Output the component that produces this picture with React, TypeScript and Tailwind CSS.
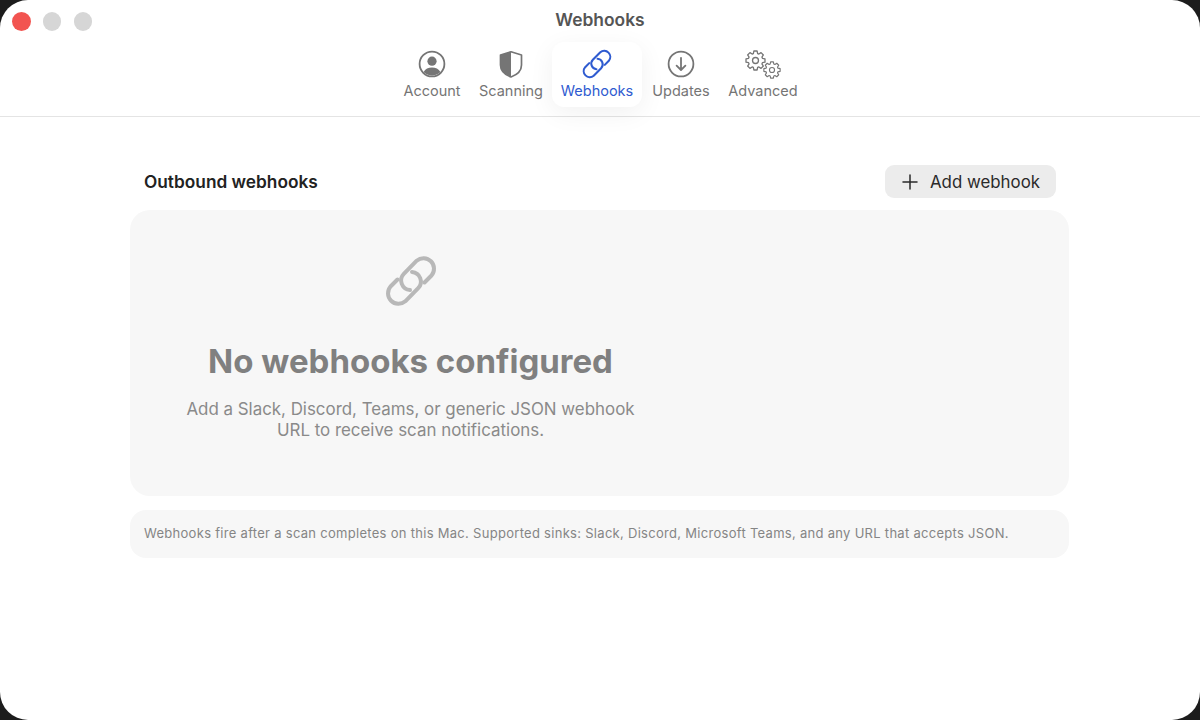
import { Plus } from 'lucide-react'
import type { ReactNode } from 'react'

function LinkIcon({ className = '', strokeWidth = 4 }: { className?: string; strokeWidth?: number }) {
  return (
    <svg viewBox="5 5 52 52" fill="none" stroke="currentColor" strokeWidth={strokeWidth} strokeLinecap="round" strokeLinejoin="round" className={className}>
      <path d="M44.500 32.500 51.500 25.500A10.500 10.500 0 0 0 36.700 10.700L23.800 23.800A9.600 9.600 0 0 0 30 40" />
      <path d="M17.500 29.500 10.500 36.500A10.500 10.500 0 0 0 25.300 51.300L38.200 38.200A9.600 9.600 0 0 0 32 22" />
    </svg>
  )
}

function AccountIcon() {
  return (
    <svg viewBox="0 0 28 28" className="h-7 w-7 text-[#757575]">
      <circle cx="14" cy="14" r="12.400" fill="none" stroke="currentColor" strokeWidth="1.800" />
      <circle cx="14" cy="11.200" r="4.600" fill="currentColor" />
      <path d="M5.600 22c1.600-3.300 4.800-4.600 8.400-4.600s6.800 1.300 8.400 4.600c-2.200 2.300-5.200 3.500-8.400 3.500s-6.200-1.200-8.400-3.500z" fill="currentColor" />
    </svg>
  )
}

function ShieldIcon() {
  return (
    <svg viewBox="0 0 28 28" className="h-7 w-7 text-[#757575]">
      <path d="M14 1.800 24.500 5v10c0 6-4.500 9.800-10.500 12C8 24.800 3.500 21 3.500 15V5z" fill="none" stroke="currentColor" strokeWidth="1.700" strokeLinejoin="round" />
      <path d="M14 1.800V27C8 24.800 3.500 21 3.500 15V5z" fill="currentColor" />
    </svg>
  )
}

function UpdatesIcon() {
  return (
    <svg viewBox="0 0 28 28" fill="none" stroke="currentColor" strokeWidth="1.800" strokeLinecap="round" strokeLinejoin="round" className="h-7 w-7 text-[#757575]">
      <circle cx="14" cy="14" r="12.400" />
      <path d="M14 7.800v12M9.600 15.600l4.400 4.400 4.400-4.400" />
    </svg>
  )
}

// cog outline with 8 teeth
function cogPath(outer: number, root: number) {
  const pts: string[] = []
  for (let i = 0; i < 8; i++) {
    const a = (i * Math.PI) / 4 - Math.PI / 2
    const offsets: [number, number][] = [
      [-0.3, root],
      [-0.17, outer],
      [0.17, outer],
      [0.3, root],
    ]
    offsets.forEach(([o, r]) => {
      pts.push(`${(12 + r * Math.cos(a + o)).toFixed(2)} ${(12 + r * Math.sin(a + o)).toFixed(2)}`)
    })
  }
  return `M${pts.join('L')}Z`
}

function Cog({ className = '' }: { className?: string }) {
  return (
    <svg viewBox="0 0 24 24" fill="none" stroke="currentColor" strokeWidth="1.500" strokeLinejoin="round" className={className}>
      <path d={cogPath(11, 8.300)} />
      <circle cx="12" cy="12" r="3.400" />
    </svg>
  )
}

function GearsIcon() {
  return (
    <span className="relative block h-7 w-9 text-[#757575]">
      <Cog className="absolute left-[0px] top-[0px] h-[21px] w-[21px]" />
      <Cog className="absolute left-[18px] top-[11px] h-[18px] w-[18px]" />
    </span>
  )
}

const tabs: { label: string; icon: ReactNode; active?: boolean; width: string }[] = [
  { label: 'Account', icon: <AccountIcon />, width: 'w-[76px]' },
  { label: 'Scanning', icon: <ShieldIcon />, width: 'w-[82px]' },
  { label: 'Webhooks', icon: <LinkIcon className="h-[30px] w-[30px]" strokeWidth={3.6} />, active: true, width: 'w-[90px]' },
  { label: 'Updates', icon: <UpdatesIcon />, width: 'w-[78px]' },
  { label: 'Advanced', icon: <GearsIcon />, width: 'w-[86px]' },
]

export default function App() {
  return (
    <div className="h-[720px] w-[1200px] overflow-hidden bg-[#1c1c1c] font-['Inter',sans-serif]">
      <div className="h-full w-full rounded-[28px] bg-white">
        {/* Title bar and toolbar */}
        <header className="relative flex h-[117px] flex-col items-center border-b border-[#e4e4e4]">
          <div className="absolute left-[12px] top-[12px] flex gap-[12.200px]">
            <span className="h-[18.600px] w-[18.600px] rounded-full bg-[#f25450]" />
            <span className="h-[18.600px] w-[18.600px] rounded-full bg-[#d6d6d6]" />
            <span className="h-[18.600px] w-[18.600px] rounded-full bg-[#d6d6d6]" />
          </div>
          <h1 className="mt-[10px] text-[17.400px] font-semibold leading-[20px] text-[#555555]">Webhooks</h1>
          <nav className="mt-[12px] flex">
            {tabs.map((tab) => (
              <div
                key={tab.label}
                className={`flex h-[65px] flex-col items-center justify-start rounded-[12px] ${tab.active ? 'pt-[7px]' : 'pt-[8px]'} ${tab.width} ${
                  tab.active ? 'bg-white text-[#2f5bd0] shadow-[0_6px_26px_rgba(0,0,0,0.06)]' : 'text-[#757575]'
                }`}
              >
                {tab.icon}
                <span className={`${tab.active ? 'mt-[3px]' : 'mt-[4px]'} text-[14.500px] leading-[18px]`}>{tab.label}</span>
              </div>
            ))}
          </nav>
        </header>

        <main className="ml-[130px] w-[939px] pt-[48px]">
          <div className="flex h-[33px] items-center justify-between pl-[14px] pr-[13px]">
            <h2 className="pt-[1px] text-[17.300px] font-semibold text-[#222222]">Outbound webhooks</h2>
            <button type="button" className="flex h-[33px] w-[171px] items-center gap-[8px] rounded-[9px] bg-[#ececec] pl-[13px] text-[#2a2a2a]">
              <Plus className="h-6 w-6" strokeWidth={1.500} />
              <span className="pt-[2px] text-[16.850px]">Add webhook</span>
            </button>
          </div>

          <section className="mt-[12px] h-[286px] rounded-[20px] bg-[#f7f7f7]">
            <div className="flex w-[561px] flex-col items-center pt-[45px]">
              <LinkIcon className="h-[52px] w-[52px] text-[#b8b8b8]" />
              <h3 className="mt-[34px] text-[33px] font-bold leading-[40px] text-[#808080]">No webhooks configured</h3>
              <p className="mt-[18px] w-[480px] text-center text-[16.900px] leading-[21px] text-[#8a8a8a]">
                Add a Slack, Discord, Teams, or generic JSON webhook URL to receive scan notifications.
              </p>
            </div>
          </section>

          <p className="mt-[14px] flex h-[48px] items-center rounded-[16px] bg-[#f7f7f7] px-[14px] text-[13px] tracking-[0.290px] text-[#858585]">
            Webhooks fire after a scan completes on this Mac. Supported sinks: Slack, Discord, Microsoft Teams, and any URL that accepts JSON.
          </p>
        </main>
      </div>
    </div>
  )
}
